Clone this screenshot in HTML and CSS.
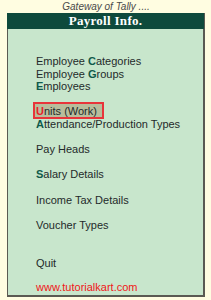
FILE: index.html
```html
<!DOCTYPE html>
<html>
<head>
<meta charset="utf-8">
<link rel="stylesheet" href="styles.css">
</head>
<body>
<div class="page">
  <div class="gateway">Gateway of Tally ....</div>
  <div class="panel">
    <div class="header">Payroll Info.</div>
    <div class="menu">
      <div class="item">Employee <b class="key">C</b>ategories</div>
      <div class="item">Employee <b class="key">G</b>roups</div>
      <div class="item"><b class="key">E</b>mployees</div>
      <div class="item gap"><span class="sel"><b class="key-sel">U</b>nits (Work)</span></div>
      <div class="item"><b class="key">A</b>ttendance/Production Types</div>
      <div class="item gap">Pay Heads</div>
      <div class="item gap"><b class="key">S</b>alary Details</div>
      <div class="item gap">Income Tax Details</div>
      <div class="item gap">Voucher Types</div>
      <div class="item gap2">Quit</div>
      <div class="site">www.tutorialkart.com</div>
    </div>
  </div>
</div>
</body>
</html>
```

FILE: styles.css
```css
html, body {
  margin: 0;
  padding: 0;
  background: #fffde1;
}
.page {
  width: 211px;
  height: 300px;
  padding: 0 6px 0 7px;
  box-sizing: border-box;
}
.gateway {
  height: 13px;
  line-height: 13px;
  text-align: center;
  font-family: "Liberation Sans", Arial, sans-serif;
  font-style: italic;
  font-size: 10px;
  color: #4a4a4a;
}
.panel {
  height: 284px;
  box-sizing: border-box;
  background: #c8e6cc;
  border: 1px solid #5a5a52;
  border-right-width: 2px;
  border-bottom-width: 2px;
}
.header {
  height: 16px;
  margin: -1px -1px 0 -1px;
  background: #0e4a3c;
  color: #ffffff;
  font-family: "Liberation Serif", "Times New Roman", serif;
  font-weight: bold;
  font-size: 13px;
  line-height: 16px;
  letter-spacing: 0.3px;
  text-align: center;
}
.menu {
  padding: 26px 0 0 28px;
  font-family: "Liberation Sans", Arial, sans-serif;
  font-size: 11px;
  color: #1f2a2a;
}
.item {
  height: 12.6px;
  line-height: 12.6px;
  white-space: nowrap;
}
.gap {
  margin-top: 12.6px;
}
.gap2 {
  margin-top: 26px;
}
.key {
  color: #0f5a4a;
  font-weight: bold;
}
.key-sel {
  color: #e8202a;
  font-weight: bold;
}
.sel {
  background: #b8bd9c;
  border: 2px solid #e8343a;
  padding: 1px 5px 0 1px;
  margin-left: -3px;
}
.site {
  margin-top: 11px;
  line-height: 13px;
  color: #f01818;
  font-size: 11px;
}
```
